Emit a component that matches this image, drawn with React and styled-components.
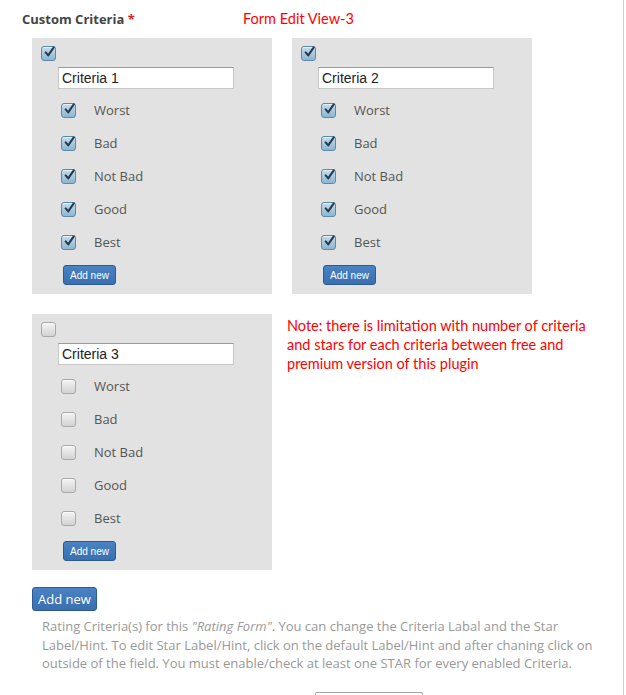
import styled, { createGlobalStyle } from 'styled-components';

const GlobalStyle = createGlobalStyle`
  html, body {
    margin: 0;
    padding: 0;
    background: #fff;
  }
  body {
    font-family: "Open Sans", "Liberation Sans", sans-serif;
  }
`;

const Page = styled.div`
  width: 624px;
  min-height: 695px;
  border-right: 1px solid #cfcfcf;
  box-sizing: border-box;
  padding: 10px 0 0 0;
  overflow: hidden;
`;

const Header = styled.div`
  display: flex;
  align-items: baseline;
  height: 18px;
  padding-left: 22px;
`;

const Title = styled.span`
  font-size: 13px;
  font-weight: 700;
  color: #444;
  line-height: 18px;
  width: 221px;
`;

const Required = styled.span`
  color: #e02020;
`;

const Annotation = styled.span`
  font-family: Lato, "Open Sans", sans-serif;
  font-size: 14.5px;
  color: #ff0000;
  line-height: 18px;
`;

const Grid = styled.div`
  display: grid;
  grid-template-columns: 240px 240px;
  column-gap: 20px;
  row-gap: 20px;
  margin: 10px 0 0 32px;
`;

const Panel = styled.div`
  background: #e2e2e2;
  padding: 8px 9px 9px;
  display: flex;
  flex-direction: column;
  align-items: flex-start;
`;

const Box = styled.span`
  display: inline-flex;
  align-items: center;
  justify-content: center;
  width: 15px;
  height: 15px;
  box-sizing: border-box;
  border-radius: 3px;
  flex-shrink: 0;
  border: 1px solid ${(p) => (p.$on ? '#5d89a8' : '#a9a9a9')};
  background: ${(p) =>
    p.$on
      ? 'linear-gradient(#c4dcea, #8db6d1)'
      : 'linear-gradient(#f4f4f4, #d2d2d2)'};
  box-shadow: inset 0 1px 0 rgba(255, 255, 255, 0.6);

  svg {
    width: 14px;
    height: 14px;
    margin-top: -3px;
    margin-left: 2px;
  }
`;

const CriteriaInput = styled.input`
  margin: 6px 0 0 17px;
  width: 176px;
  height: 22px;
  box-sizing: border-box;
  border: 1px solid #c8c8c8;
  border-top-color: #9a9a9a;
  background: #fff;
  padding: 0 3px;
  font-family: "Liberation Sans", Arial, sans-serif;
  font-size: 14px;
  color: #222;
  outline: none;
`;

const Rows = styled.div`
  margin-top: 5px;
  display: flex;
  flex-direction: column;
`;

const Row = styled.label`
  display: flex;
  align-items: center;
  height: 33px;
  padding-left: 20px;
`;

const RowLabel = styled.span`
  margin: -2px 0 0 18px;
  font-size: 13px;
  color: #555;
`;

const SmallButton = styled.button`
  margin: 6px 0 0 22px;
  height: 20px;
  width: 53px;
  padding: 0;
  border: 1px solid #2c5a92;
  border-radius: 3px;
  background: linear-gradient(#4a82c4, #3a6fb0);
  color: #fff;
  font-family: "Liberation Sans", Arial, sans-serif;
  font-size: 10px;
  cursor: pointer;
`;

const Note = styled.div`
  margin: 2px 0 0 -5px;
  width: 320px;
  font-family: Lato, "Open Sans", sans-serif;
  font-size: 14.5px;
  line-height: 19px;
  color: #ff0000;
`;

const BigButton = styled.button`
  margin: 17px 0 0 32px;
  height: 24px;
  width: 65px;
  padding: 0;
  border: 1px solid #2c5a92;
  border-radius: 3px;
  background: linear-gradient(#4a82c4, #3a6fb0);
  color: #fff;
  font-family: "Open Sans", sans-serif;
  font-size: 13px;
  cursor: pointer;
  display: block;
`;

const Help = styled.p`
  margin: 6px 0 0 42px;
  width: 560px;
  font-size: 13px;
  line-height: 18.5px;
  color: #999;
`;

const Footer = styled.div`
  margin: 19px 0 0 315px;
  width: 106px;
  height: 10px;
  border: 1px solid #a5a5a5;
  border-bottom: none;
  border-radius: 2px 2px 0 0;
`;

const Check = ({ on }) => (
  <Box $on={on}>
    {on && (
      <svg viewBox="0 0 13 13">
        <path d="M2 7 L5 10.5 L11.5 1" fill="none" stroke="#223a52" strokeWidth="2.4" strokeLinecap="round" strokeLinejoin="round" />
      </svg>
    )}
  </Box>
);

const stars = ['Worst', 'Bad', 'Not Bad', 'Good', 'Best'];

const CriteriaPanel = ({ name, on }) => (
  <Panel>
    <Check on={on} />
    <CriteriaInput defaultValue={name} />
    <Rows>
      {stars.map((s) => (
        <Row key={s}>
          <Check on={on} />
          <RowLabel>{s}</RowLabel>
        </Row>
      ))}
    </Rows>
    <SmallButton>Add new</SmallButton>
  </Panel>
);

export default function App() {
  return (
    <>
      <GlobalStyle />
      <Page>
        <Header>
          <Title>
            Custom Criteria <Required>*</Required>
          </Title>
          <Annotation>Form Edit View-3</Annotation>
        </Header>
        <Grid>
          <CriteriaPanel name="Criteria 1" on />
          <CriteriaPanel name="Criteria 2" on />
          <CriteriaPanel name="Criteria 3" />
          <Note>
            Note: there is limitation with number of criteria and stars for each criteria between free and premium version of this plugin
          </Note>
        </Grid>
        <BigButton>Add new</BigButton>
        <Help>
          Rating Criteria(s) for this <em>"Rating Form"</em>. You can change the Criteria Labal and the Star
          Label/Hint. To edit Star Label/Hint, click on the default Label/Hint and after chaning click on
          outside of the field. You must enable/check at least one STAR for every enabled Criteria.
        </Help>
        <Footer />
      </Page>
    </>
  );
}
